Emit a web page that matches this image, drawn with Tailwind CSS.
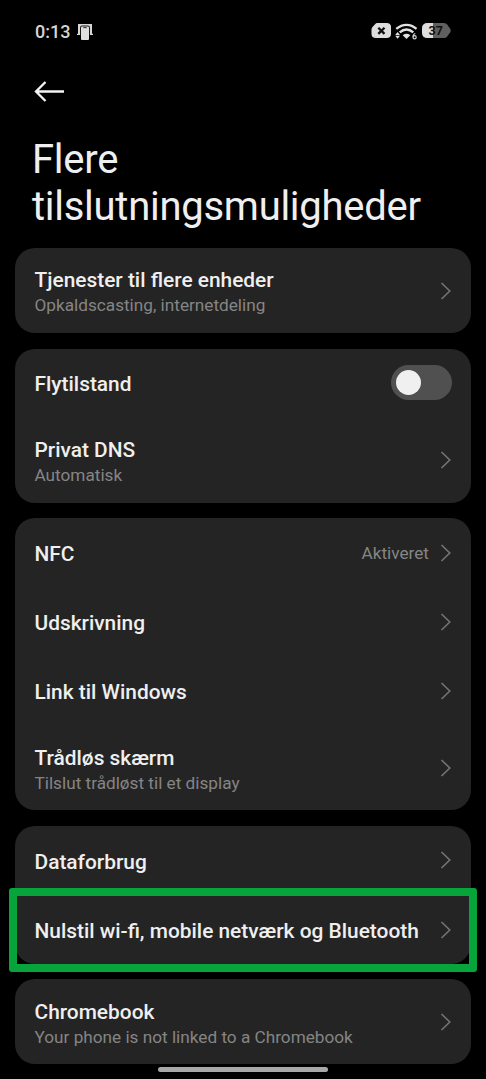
<!DOCTYPE html>
<html lang="da">
<head>
<meta charset="utf-8">
<title>Flere tilslutningsmuligheder</title>
<script src="https://cdn.jsdelivr.net/npm/@tailwindcss/browser@4"></script>
</head>
<body class="bg-black font-['Roboto',sans-serif] text-[#efefef]">
<svg class="hidden"><symbol id="chev" viewBox="0 0 12 20"><path d="M1.500 2 9.800 10 1.500 18" fill="none" stroke="#747474" stroke-width="1.600"/></symbol></svg>
<div class="relative flex h-[1079px] w-[486px] flex-col overflow-hidden">
  <header class="flex h-[62px] items-center justify-between pr-[35px] pl-[35px]">
    <div class="flex items-center gap-[7px]">
      <span class="pt-[2px] text-[18px] leading-none font-medium text-[#d6d6d6]">0:13</span>
      <svg class="mt-[2px] h-[18px] w-[16px]" viewBox="0 0 16 18"><path d="M1 1h14v9.800h1v1.200H0v-1.200h1z" fill="#d6d6d6"/><path d="M3 12.500V4.500Q3 2.500 5 2.500h6q2 0 2 2v8z" fill="#1a1a1a"/><path d="M4 4.500q0-1 1-1h6q1 0 1 1V16q0 1-1 1H5q-1 0-1-1z" fill="#e0e0e0"/><path d="M6.300 4h3.400v1.200H6.300z" fill="#444"/></svg>
    </div>
    <div class="flex items-center gap-[4px] pb-px">
      <svg class="h-[17px] w-[20px]" viewBox="0 0 20 17"><path d="M6 1h9.500Q20 1 20 5v7q0 4-4.500 4H5Q.5 16 .5 12V7.500Q.500 6 1.500 5L4.500 1.800Q5.200 1 6 1z" fill="#dedede"/><path d="m7.300 5.700 6.200 6.200m0-6.200-6.200 6.200" stroke="#111" stroke-width="2.300"/></svg>
      <svg class="h-[18px] w-[23px]" viewBox="0 0 23 18"><g fill="none" stroke="#e2e2e2" stroke-width="2.300"><path d="M1.300 6.900Q6 2.800 11.500 2.800T21.500 6.900"/><path d="M4.700 10.400Q8 7.500 11.500 7.500t6.800 2.900"/></g><path d="M7.700 13.200q3.800-2.800 7.600 0L11.500 17z" fill="#e2e2e2"/><path d="m2.600 10 2.400 2.900H.200zM2.600 16.700l2.400-2.900H.200z" fill="#e2e2e2"/><path d="M20.300 11.500q-2.100.4-2.300 3.400" fill="none" stroke="#d6d6d6" stroke-width="1.200"/><circle cx="19.600" cy="15.300" r="1.600" fill="none" stroke="#d6d6d6" stroke-width="1.200"/></svg>
      <div class="relative h-[17px] w-[29px]">
        <svg class="h-[17px] w-[29px]" viewBox="0 0 29 17"><path d="M6 1h16q2 0 3.200 1.500l3 4.300q1 1.700 0 3.400l-3 4.300Q24 16 22 16H6Q0 16 0 10.500v-4Q0 1 6 1z" fill="#606060"/><path d="M11 1H6Q0 1 0 6.500v4Q0 16 6 16h5z" fill="#dedede"/></svg>
        <span class="absolute top-[2px] left-[6.500px] text-[12.500px] leading-[14px] font-bold text-[#111]">37</span>
      </div>
    </div>
  </header>
  <div class="flex h-[60px] items-center pl-[34px]">
    <svg class="h-[22px] w-[31px]" viewBox="0 0 31 22"><path d="M11.500 1 2 10.500l9.500 9.500M2 10.500h28" fill="none" stroke="#f4f4f4" stroke-width="2.300"/></svg>
  </div>
  <h1 class="flex h-[126px] flex-col pt-[14px] pl-[32px] text-[40px] leading-[47px] tracking-[-0.270px]"><span>Flere</span><span>tilslutningsmuligheder</span></h1>
  <main class="flex flex-col gap-[15.500px] px-[15px] text-[20.880px] leading-[24px] font-medium">
    <section class="rounded-[20px] bg-[#242424]">
      <div class="flex h-[85px] items-center justify-between pr-[19.500px] pl-[19.500px]"><div class="flex flex-col pt-[4px]"><span>Tjenester til flere enheder</span><span class="text-[17.200px] leading-[26px] font-normal text-[#858585]">Opkaldscasting, internetdeling</span></div><svg class="h-[20px] w-[12px]"><use href="#chev"/></svg></div>
    </section>
    <section class="rounded-[20px] bg-[#242424]">
      <div class="flex h-[69px] items-center justify-between pr-[19.500px] pl-[19.500px]"><span class="pt-[2px]">Flytilstand</span><div class="mb-px flex h-[35px] w-[60.500px] items-center rounded-full bg-[#505050] pl-[5px]"><div class="size-[25px] rounded-full bg-[#f0f0f0]"></div></div></div>
      <div class="flex h-[85px] items-center justify-between pr-[19.500px] pl-[19.500px]"><div class="flex flex-col pt-[5px]"><span>Privat DNS</span><span class="text-[17.200px] leading-[26px] font-normal text-[#858585]">Automatisk</span></div><svg class="h-[20px] w-[12px]"><use href="#chev"/></svg></div>
    </section>
    <section class="rounded-[20px] bg-[#242424]">
      <div class="flex h-[69px] items-center pr-[19.500px] pl-[19.500px]"><span class="grow pt-[2px]">NFC</span><span class="mr-[10.500px] pt-px text-[17.200px] font-normal text-[#858585]">Aktiveret</span><svg class="h-[20px] w-[12px]"><use href="#chev"/></svg></div>
      <div class="flex h-[69px] items-center justify-between pr-[19.500px] pl-[19.500px]"><span class="pt-[2px]">Udskrivning</span><svg class="h-[20px] w-[12px]"><use href="#chev"/></svg></div>
      <div class="flex h-[69px] items-center justify-between pr-[19.500px] pl-[19.500px]"><span class="pt-[2px]">Link til Windows</span><svg class="h-[20px] w-[12px]"><use href="#chev"/></svg></div>
      <div class="flex h-[85px] items-center justify-between pr-[19.500px] pl-[19.500px]"><div class="flex flex-col pt-[6.500px]"><span>Trådløs skærm</span><span class="text-[17.200px] leading-[26px] font-normal text-[#858585]">Tilslut trådløst til et display</span></div><svg class="h-[20px] w-[12px]"><use href="#chev"/></svg></div>
    </section>
    <section class="rounded-[20px] bg-[#242424]">
      <div class="flex h-[69px] items-center justify-between pr-[19.500px] pl-[19.500px]"><span class="pt-[3px]">Dataforbrug</span><svg class="h-[20px] w-[12px]"><use href="#chev"/></svg></div>
      <div class="relative flex h-[69px] items-center justify-between pr-[19.500px] pl-[19.500px]"><span class="pt-[3px]">Nulstil wi-fi, mobile netværk og Bluetooth</span><svg class="mt-px h-[20px] w-[12px]"><use href="#chev"/></svg>
        <div class="absolute -top-[7px] -right-[6px] -bottom-[8px] -left-[6px] rounded-[3px] border-8 border-[#06a43b]"></div>
      </div>
    </section>
    <section class="rounded-[20px] bg-[#242424]">
      <div class="flex h-[85px] items-center justify-between pr-[19.500px] pl-[19.500px]"><div class="flex flex-col pt-[6.500px]"><span>Chromebook</span><span class="text-[17.200px] leading-[26px] font-normal text-[#858585]">Your phone is not linked to a Chromebook</span></div><svg class="h-[20px] w-[12px]"><use href="#chev"/></svg></div>
    </section>
  </main>
  <div class="absolute top-[1067px] left-[158px] h-[5px] w-[170px] rounded-full bg-[#a8a8a8]"></div>
</div>
</body>
</html>
